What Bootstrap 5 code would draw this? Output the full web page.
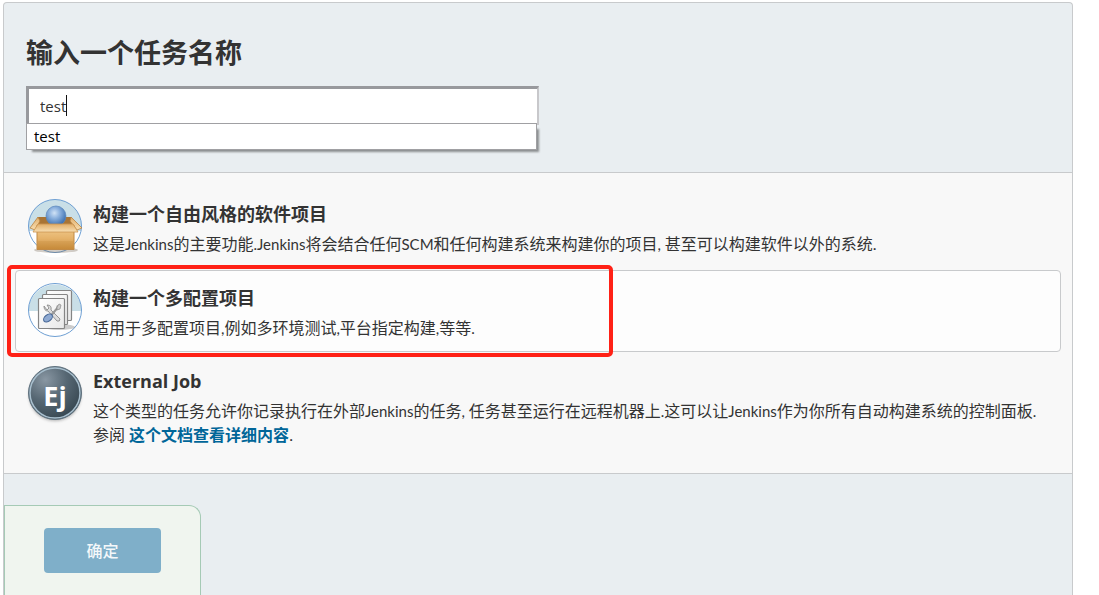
<!DOCTYPE html>
<html lang="zh-CN">
<head>
<meta charset="utf-8">
<meta name="viewport" content="width=device-width, initial-scale=1">
<title>新建任务 [Jenkins]</title>
<link href="https://cdn.jsdelivr.net/npm/bootstrap@5.3.0/dist/css/bootstrap.min.css" rel="stylesheet">
<style>
body { font-family: "Open Sans", "Noto Sans CJK SC", sans-serif; font-size: 16px; line-height: 24px; color: #333; background: #fff; }
.page { padding: 2px 26px 0 3px; overflow: hidden; }
.job-panel { background: #e9eef1; border: 1px solid #c8cacc; border-bottom: 0; border-radius: 4px 4px 0 0; }
.name-area { padding: 32px 22px 23px; }
.page-title { font-size: 27px; line-height: 36px; font-weight: 700; margin-bottom: 15px; }
.name-box { max-width: 513px; }
.name-input { display: block; width: 100%; height: 39px; padding: 0 11px; font-size: 15px; color: #333; background: #fff; outline: 0; border-style: solid; border-width: 3px 2px 2px 3px; border-color: #98999d #c8c8cb #c8c8cb #98999d; caret-color: transparent; }
.text-caret { left: 40px; top: 9px; width: 1px; height: 21px; background: #111; }
.suggest { top: 37px; left: 0; right: 2px; height: 27px; padding: 0 7px; font-size: 15px; color: #000; background: #fff; border: 1px solid #a0a0a3; box-shadow: 4px 4px 2px -2px #8b8e90; }
.types { background: #f8f8f8; border-top: 1px solid #c8cacc; border-bottom: 1px solid #c8cacc; padding: 13px 11px; }
.job-type { gap: 11px; padding: 12px; border: 1px solid transparent; border-radius: 4px; margin-bottom: 1px; }
.job-type.active { background: #fdfdfd; border-color: #c8cacc; margin-top: 2px; }
.job-type svg { width: 54px; height: 54px; overflow: visible; }
.job-name { font-size: 18px; line-height: 24px; font-weight: 700; margin: 3px 0 6px; }
.job-type p { font-family: Lato, "Noto Sans CJK SC", sans-serif; margin-bottom: -1px; }
.en { font-size: 15px; line-height: 1; }
.doc-link { color: #069; font-weight: 700; text-decoration: none; }
.red-mark { left: -9px; top: -6px; width: 606px; height: 92px; border: 4px solid #ff2116; border-radius: 5px; pointer-events: none; }
.submit-area { margin-top: 31px; padding: 22px 39px 60px; background: #f0f5ef; border: 1px solid #a5cab5; border-bottom: 0; border-radius: 0 12px 0 0; }
.btn-ok { width: 117px; height: 45px; padding: 0; font-size: 16px; font-weight: 500; color: #f4f8fa; background: #7fafc9; border: 0; border-radius: 4px; }
.btn-ok:hover { color: #fff; background: #6ba0bd; }
</style>
</head>
<body>
<main class="page vh-100">
  <form class="job-panel">
    <div class="name-area">
      <h1 class="page-title"><label for="name">输入一个任务名称</label></h1>
      <div class="name-box position-relative mb-4">
        <input class="name-input" id="name" type="text" value="test" autocomplete="off">
        <span class="text-caret position-absolute"></span>
        <div class="suggest position-absolute" role="listbox"><div role="option">test</div></div>
      </div>
    </div>
    <div class="types">
      <div class="job-type d-flex align-items-start">
        <svg class="flex-shrink-0" viewBox="0 0 54 54" aria-hidden="true">
          <defs>
            <linearGradient id="box" x2="0" y2="1"><stop stop-color="#f3cf94"/><stop offset=".55" stop-color="#e5b26a"/><stop offset="1" stop-color="#c98c3b"/></linearGradient>
            <linearGradient id="flap" x2="0" y2="1"><stop stop-color="#e0ad68"/><stop offset="1" stop-color="#f8dfb3"/></linearGradient>
            <radialGradient id="ball" cx=".42" cy=".35" r=".65"><stop stop-color="#d0e2f5"/><stop offset=".4" stop-color="#8eb3df"/><stop offset="1" stop-color="#3a6eae"/></radialGradient>
          </defs>
          <circle cx="27" cy="27" r="26.5" fill="#c9dfe7"/>
          <path d="M.5 32h53a26.500 26.500 0 0 1-53 0z" fill="#fff"/>
          <circle cx="27" cy="27" r="26.500" fill="none" stroke="#6e9fd3"/>
          <ellipse cx="28" cy="51" rx="22" ry="3" fill="#6b5a45" opacity=".3"/>
          <path d="M10 18h33l3 7H8z" fill="#a87435"/>
          <path d="M10 18L2 29l5 2 5-9zM43 18l11 11-5 2-7-9z" fill="url(#flap)" stroke="#b98340" stroke-width=".8"/>
          <circle cx="28" cy="17" r="10" fill="url(#ball)" stroke="#5a86bb" stroke-width=".7"/>
          <path d="M9 26h37v24.500H9z" fill="url(#box)" stroke="#c18a45"/>
          <path d="M10 42h35v8H10z" fill="#c08333" opacity=".2"/>
          <path d="M10 25h35l5 8H5z" fill="url(#flap)" stroke="#cb9650" stroke-width=".8"/>
        </svg>
        <div>
          <h2 class="job-name">构建一个自由风格的软件项目</h2>
          <p>这是<span class="en">Jenkins</span>的主要功能<span class="en">.Jenkins</span>将会结合任何<span class="en">SCM</span>和任何构建系统来构建你的项目<span class="en">, </span>甚至可以构建软件以外的系统.</p>
        </div>
      </div>
      <div class="job-type active position-relative d-flex align-items-start">
        <svg class="flex-shrink-0" viewBox="0 0 54 54" aria-hidden="true">
          <defs><linearGradient id="sheet" x2="1" y2="1"><stop stop-color="#fff"/><stop offset="1" stop-color="#e8e8e8"/></linearGradient></defs>
          <circle cx="27" cy="27" r="26.500" fill="#fff"/>
          <path d="M.5 28a26.500 26.500 0 0 1 53 0z" fill="#c9dfe7"/>
          <circle cx="27" cy="27" r="26.500" fill="none" stroke="#6e9fd3"/>
          <ellipse cx="31" cy="44" rx="16" ry="3" fill="#555" opacity=".3"/>
          <g fill="url(#sheet)" stroke="#858585" stroke-width="1.200">
            <rect x="18.500" y="7.500" width="25" height="30" rx="1"/>
            <rect x="14.500" y="11.500" width="25" height="30" rx="1"/>
            <rect x="10.500" y="15.500" width="26" height="30" rx="1"/>
          </g>
          <path d="M16 23q0 5 4 5l9 10q3 1 3-2l-9-9q1-5-4-5l2 3-2 2z" fill="#ddd" stroke="#8b8b8b" stroke-width=".9"/>
          <path d="M30 22.500l-1 3-6 7" fill="none" stroke="#999" stroke-width="2.200"/>
          <path d="M29 24l2-3 2 1-1 4-3 1z" fill="#ccc" stroke="#888" stroke-width=".7"/>
          <ellipse cx="20" cy="35" rx="5" ry="3.200" transform="rotate(-38 20 35)" fill="#8faad2" stroke="#486998" stroke-width="1.100"/>
        </svg>
        <div>
          <h2 class="job-name">构建一个多配置项目</h2>
          <p>适用于多配置项目<span class="en">,</span>例如多环境测试<span class="en">,</span>平台指定构建<span class="en">,</span>等等<span class="en">.</span></p>
        </div>
        <span class="red-mark position-absolute"></span>
      </div>
      <div class="job-type d-flex align-items-start">
        <svg class="flex-shrink-0" viewBox="0 0 54 54" aria-hidden="true">
          <defs>
            <radialGradient id="ej" cx=".32" cy=".25" r=".8"><stop stop-color="#8997a3"/><stop offset=".5" stop-color="#566773"/><stop offset="1" stop-color="#364650"/></radialGradient>
            <filter id="soft" x="-20%" y="-20%" width="140%" height="140%"><feGaussianBlur stdDeviation="1.500"/></filter>
          </defs>
          <circle cx="27" cy="29" r="26" fill="#333" opacity=".35" filter="url(#soft)"/>
          <circle cx="27" cy="27" r="26.500" fill="url(#ej)" stroke="#60727f"/>
          <circle cx="27" cy="27" r="25" fill="none" stroke="#a9c0cf" stroke-width="1.500"/>
          <text x="27" y="40" text-anchor="middle" font-family="Open Sans, sans-serif" font-weight="700" font-size="27" fill="#fff">Ej</text>
        </svg>
        <div>
          <h2 class="job-name">External Job</h2>
          <p>这个类型的任务允许你记录执行在外部<span class="en">Jenkins</span>的任务<span class="en">, </span>任务甚至运行在远程机器上<span class="en">.</span>这可以让<span class="en">Jenkins</span>作为你所有自动构建系统的控制面板<span class="en">.</span> 参阅 <a class="doc-link" href="#">这个文档查看详细内容</a>.</p>
        </div>
      </div>
    </div>
    <div class="d-flex">
      <div class="submit-area">
        <button class="btn btn-ok" type="submit">确定</button>
      </div>
    </div>
  </form>
</main>
<script src="https://cdn.jsdelivr.net/npm/bootstrap@5.3.0/dist/js/bootstrap.bundle.min.js"></script>
</body>
</html>
